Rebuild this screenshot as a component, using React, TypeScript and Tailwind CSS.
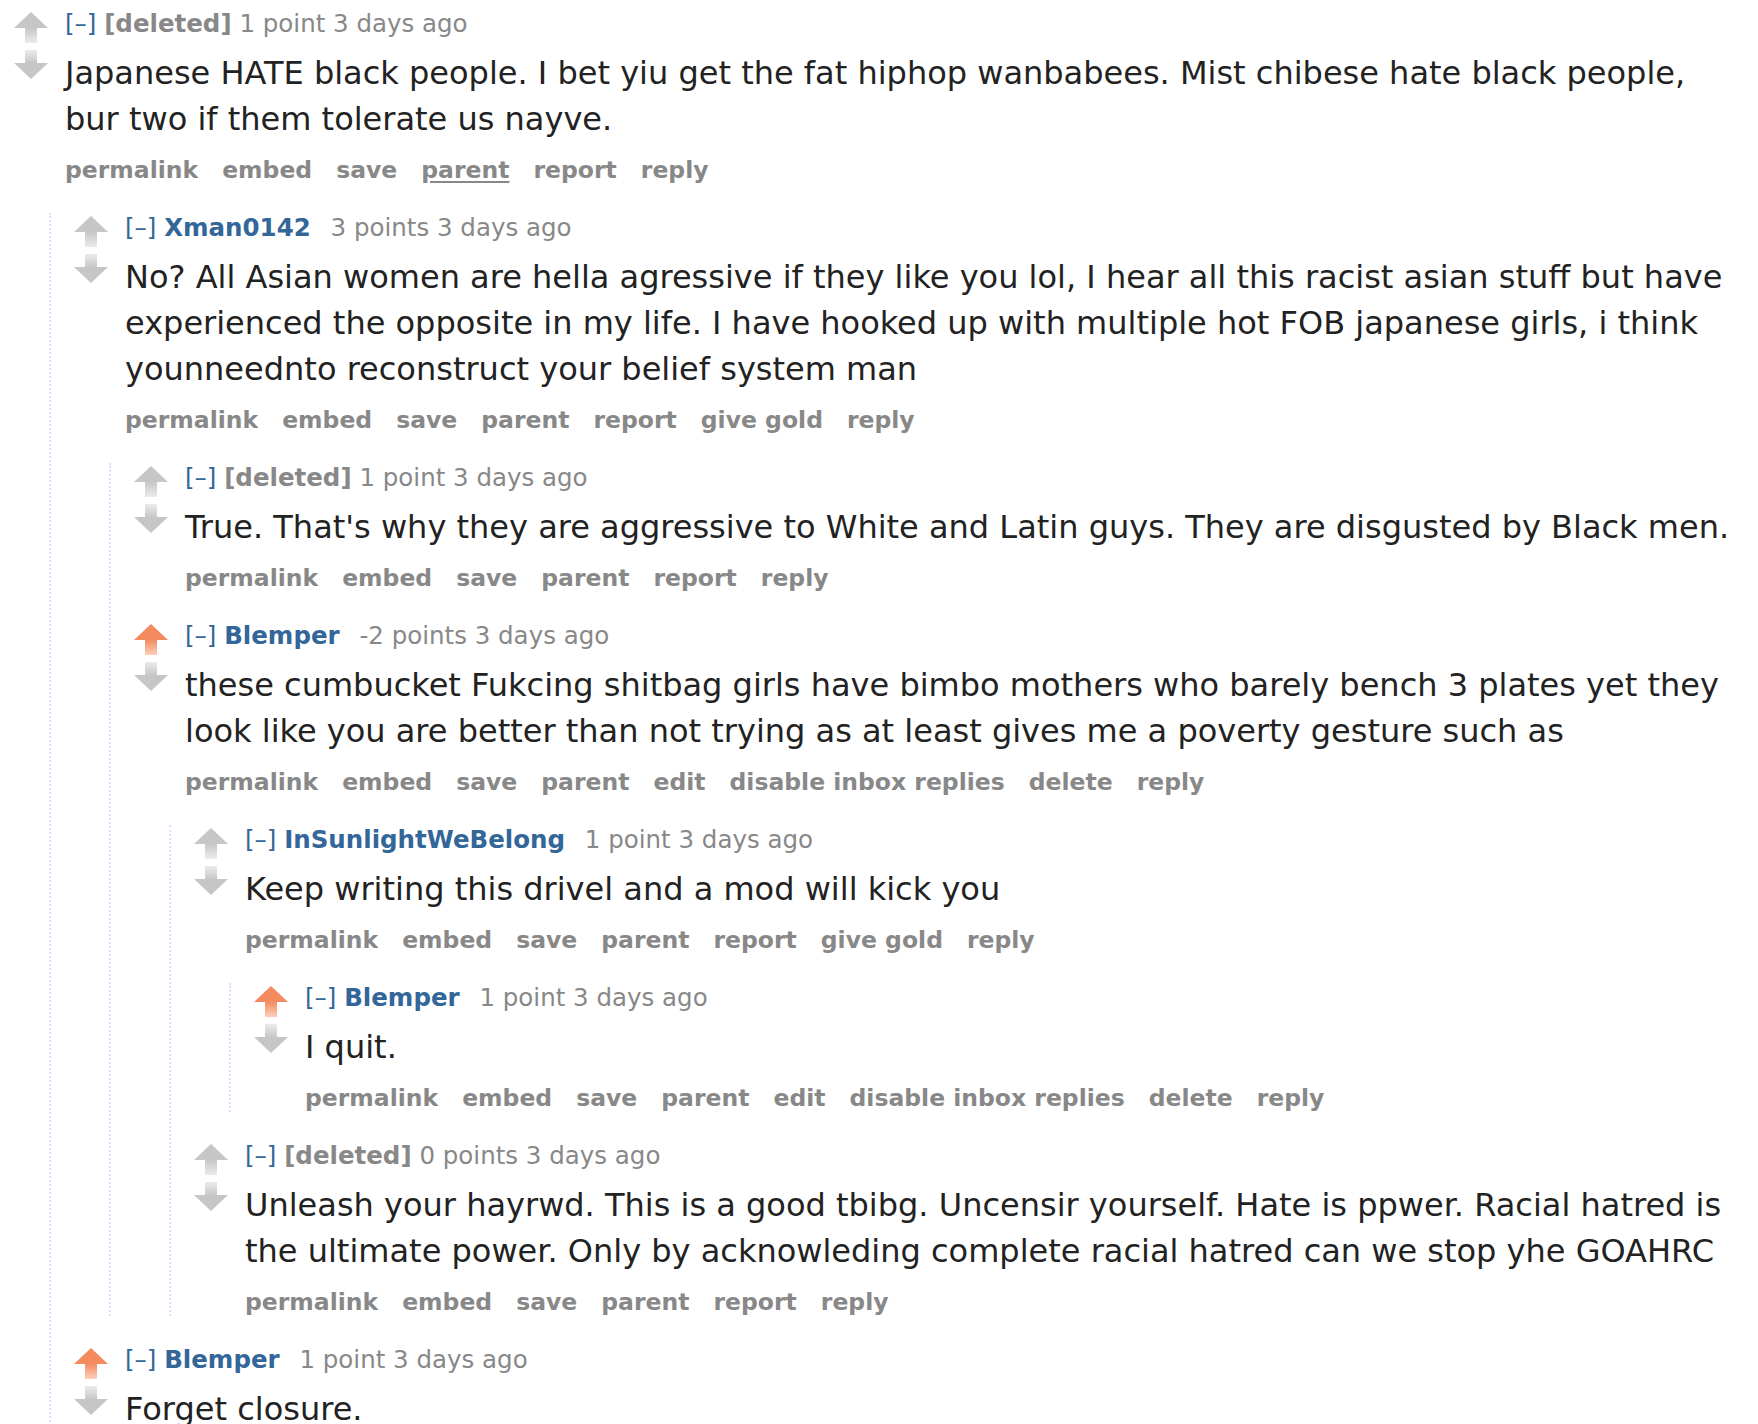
import React, { useId } from 'react';

type Comment = {
  author?: string;
  score: string;
  upvoted?: boolean;
  lines: string[];
  actions: string[];
  underlined?: string;
  children?: Comment[];
};

const own = ['permalink', 'embed', 'save', 'parent', 'edit', 'disable inbox replies', 'delete', 'reply'];
const other = ['permalink', 'embed', 'save', 'parent', 'report', 'give gold', 'reply'];
const otherNoGold = ['permalink', 'embed', 'save', 'parent', 'report', 'reply'];

const thread: Comment = {
  score: '1 point',
  lines: [
    'Japanese HATE black people. I bet yiu get the fat hiphop wanbabees. Mist chibese hate black people,',
    'bur two if them tolerate us nayve.',
  ],
  actions: otherNoGold,
  underlined: 'parent',
  children: [
    {
      author: 'Xman0142',
      score: '3 points',
      lines: [
        'No? All Asian women are hella agressive if they like you lol, I hear all this racist asian stuff but have',
        'experienced the opposite in my life. I have hooked up with multiple hot FOB japanese girls, i think',
        'younneednto reconstruct your belief system man',
      ],
      actions: other,
      children: [
        {
          score: '1 point',
          lines: ["True. That's why they are aggressive to White and Latin guys. They are disgusted by Black men."],
          actions: otherNoGold,
        },
        {
          author: 'Blemper',
          score: '-2 points',
          upvoted: true,
          lines: [
            'these cumbucket Fukcing shitbag girls have bimbo mothers who barely bench 3 plates yet they',
            'look like you are better than not trying as at least gives me a poverty gesture such as',
          ],
          actions: own,
          children: [
            {
              author: 'InSunlightWeBelong',
              score: '1 point',
              lines: ['Keep writing this drivel and a mod will kick you'],
              actions: other,
              children: [
                {
                  author: 'Blemper',
                  score: '1 point',
                  upvoted: true,
                  lines: ['I quit.'],
                  actions: own,
                },
              ],
            },
            {
              score: '0 points',
              lines: [
                'Unleash your hayrwd. This is a good tbibg. Uncensir yourself. Hate is ppwer. Racial hatred is',
                'the ultimate power. Only by acknowleding complete racial hatred can we stop yhe GOAHRC',
              ],
              actions: otherNoGold,
            },
          ],
        },
      ],
    },
    {
      author: 'Blemper',
      score: '1 point',
      upvoted: true,
      lines: ['Forget closure.'],
      actions: own,
    },
  ],
};

// vote arrows, drawn the way old reddit's sprite looks
const Arrow: React.FC<{ dir: 'up' | 'down'; color: string; fade: string }> = ({ dir, color, fade }) => {
  const id = useId().replace(/:/g, '');
  if (dir === 'up') {
    return (
      <svg width="34" height="31" viewBox="0 0 34 31">
        <defs>
          <linearGradient id={id} x1="0" y1="0" x2="0" y2="1">
            <stop offset="0" stopColor={color} />
            <stop offset="1" stopColor={fade} />
          </linearGradient>
        </defs>
        <polygon points="17,0 34,16 0,16" fill={color} />
        <rect x="11" y="15.5" width="12" height="15.5" fill={`url(#${id})`} />
      </svg>
    );
  }
  return (
    <svg width="34" height="29" viewBox="0 0 34 29">
      <defs>
        <linearGradient id={id} x1="0" y1="0" x2="0" y2="1">
          <stop offset="0" stopColor={fade} />
          <stop offset="1" stopColor={color} />
        </linearGradient>
      </defs>
      <rect x="11" y="0" width="12" height="13.5" fill={`url(#${id})`} />
      <polygon points="0,13 34,13 17,29" fill={color} />
    </svg>
  );
};

const CommentView: React.FC<{ c: Comment; first?: boolean }> = ({ c, first }) => {
  return (
    <div className={first ? 'pt-[3px]' : 'mt-[29px] pt-[3px]'}>
      <div className="flex">
        <div className="mr-[17px] flex w-[34px] shrink-0 flex-col gap-[7px]">
          {c.upvoted ? (
            <Arrow dir="up" color="#f38b5f" fade="#fbd0bc" />
          ) : (
            <Arrow dir="up" color="#c6c6c6" fade="#ebebeb" />
          )}
          <Arrow dir="down" color="#c6c6c6" fade="#ebebeb" />
        </div>
        <div className="min-w-0">
          <div className="h-[24px] whitespace-nowrap text-[24.5px] leading-[24px]">
            <span className="text-[#369]">[–]</span>{' '}
            {c.author ? (
              <span className="mr-[12px] font-bold text-[#369]">{c.author}</span>
            ) : (
              <span className="font-bold text-[#888]">[deleted]</span>
            )}{' '}
            <span className="text-[#888]">{c.score} 3 days ago</span>
          </div>
          <div className="mt-[14px] text-[32px] leading-[46px] text-[#222]">
            {c.lines.map((line, i) => (
              <div key={i} className="whitespace-nowrap">
                {line}
              </div>
            ))}
          </div>
          <ul className="mt-[14px] flex h-[28px] gap-[24px] whitespace-nowrap text-[23.5px] font-bold leading-[28px] text-[#888]">
            {c.actions.map((a) => (
              <li key={a} className={a === c.underlined ? 'underline underline-offset-[3px]' : ''}>
                {a}
              </li>
            ))}
          </ul>
        </div>
      </div>
      {c.children && c.children.length > 0 && (
        <div className="ml-[35px] mt-[29px] border-l-2 border-dotted border-[#ddf] pl-[23px]">
          {c.children.map((child, i) => (
            <CommentView key={i} c={child} first={i === 0} />
          ))}
        </div>
      )}
    </div>
  );
};

const App: React.FC = () => {
  return (
    <div
      className="h-[1424px] w-full overflow-hidden bg-white pl-[14px] pt-[9px]"
      style={{ fontFamily: '"DejaVu Sans", Verdana, sans-serif' }}
    >
      <CommentView c={thread} first />
    </div>
  );
};

export default App;
